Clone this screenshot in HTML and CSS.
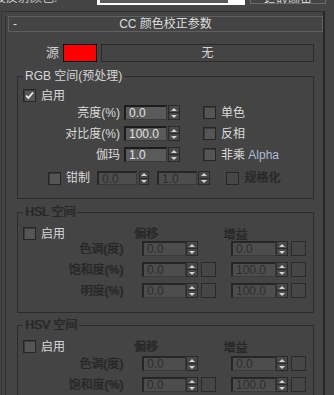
FILE: index.html
```html
<!DOCTYPE html>
<html lang="zh">
<head>
	<meta charset="UTF-8">
	<title>CC 颜色校正参数</title>
	<link rel="stylesheet" href="styles.css">
</head>
<body>
	<div class="topbar">
		<span class="tb-label">设反射颜色:</span>
		<span class="tb-field"><span class="tb-fill"></span></span>
		<span class="tb-btn">拾取颜色</span>
	</div>

	<div class="frame">
		<div class="rollout">
			<div class="rollout-head">
				<span class="head-toggle">-</span>
				<span class="head-title">CC 颜色校正参数</span>
			</div>

			<div class="source-row">
				<span class="source-label">源</span>
				<span class="swatch"></span>
				<span class="source-btn">无</span>
			</div>

			<!-- RGB -->
			<fieldset class="grp">
				<legend>RGB 空间(预处理)</legend>
				<div class="chk-row">
					<span class="chk checked"><svg width="11" height="11" viewBox="0 0 11 11"><path d="M2 5.5 L4.3 8 L9 2.5" fill="none" stroke="#f0f0f0" stroke-width="1.8"/></svg></span>
					<span class="chk-label">启用</span>
				</div>
				<div class="prow first">
					<span class="lbl">亮度(%)</span>
					<span class="num">0.0</span>
					<span class="spin"><i class="up"></i><i class="dn"></i></span>
					<span class="chk side"></span>
					<span class="chk-label">单色</span>
				</div>
				<div class="prow">
					<span class="lbl">对比度(%)</span>
					<span class="num">100.0</span>
					<span class="spin"><i class="up"></i><i class="dn"></i></span>
					<span class="chk side"></span>
					<span class="chk-label">反相</span>
				</div>
				<div class="prow">
					<span class="lbl">伽玛</span>
					<span class="num">1.0</span>
					<span class="spin"><i class="up"></i><i class="dn"></i></span>
					<span class="chk side"></span>
					<span class="chk-label">非乘 <span class="alpha">Alpha</span></span>
				</div>
				<div class="clamp-row">
					<span class="chk"></span>
					<span class="chk-label clamp-label">钳制</span>
					<span class="num off small">0.0</span>
					<span class="spin small"><i class="up"></i><i class="dn"></i></span>
					<span class="num off small second">1.0</span>
					<span class="spin wide"><i class="up"></i><i class="dn"></i></span>
					<span class="chk off norm"></span>
					<span class="chk-label off">规格化</span>
				</div>
			</fieldset>

			<!-- HSL -->
			<fieldset class="grp hsl">
				<legend class="off">HSL 空间</legend>
				<div class="hs-head">
					<span class="chk"></span>
					<span class="chk-label hs-enable">启用</span>
					<span class="off col-title">偏移</span>
					<span class="off col-title gain">增益</span>
				</div>
				<div class="hrow first">
					<span class="lbl off">色调(度)</span>
					<span class="num off">0.0</span>
					<span class="spin"><i class="up"></i><i class="dn"></i></span>
					<span class="sq hidden"></span>
					<span class="num off col2">0.0</span>
					<span class="spin"><i class="up"></i><i class="dn"></i></span>
					<span class="sq"></span>
				</div>
				<div class="hrow">
					<span class="lbl off">饱和度(%)</span>
					<span class="num off">0.0</span>
					<span class="spin"><i class="up"></i><i class="dn"></i></span>
					<span class="sq"></span>
					<span class="num off col2">100.0</span>
					<span class="spin"><i class="up"></i><i class="dn"></i></span>
					<span class="sq"></span>
				</div>
				<div class="hrow">
					<span class="lbl off">明度(%)</span>
					<span class="num off">0.0</span>
					<span class="spin"><i class="up"></i><i class="dn"></i></span>
					<span class="sq"></span>
					<span class="num off col2">100.0</span>
					<span class="spin"><i class="up"></i><i class="dn"></i></span>
					<span class="sq"></span>
				</div>
			</fieldset>

			<!-- HSV -->
			<fieldset class="grp hsv">
				<legend class="off">HSV 空间</legend>
				<div class="hs-head">
					<span class="chk"></span>
					<span class="chk-label hs-enable">启用</span>
					<span class="off col-title">偏移</span>
					<span class="off col-title gain">增益</span>
				</div>
				<div class="hrow first">
					<span class="lbl off">色调(度)</span>
					<span class="num off">0.0</span>
					<span class="spin"><i class="up"></i><i class="dn"></i></span>
					<span class="sq hidden"></span>
					<span class="num off col2">0.0</span>
					<span class="spin"><i class="up"></i><i class="dn"></i></span>
					<span class="sq"></span>
				</div>
				<div class="hrow">
					<span class="lbl off">饱和度(%)</span>
					<span class="num off">0.0</span>
					<span class="spin"><i class="up"></i><i class="dn"></i></span>
					<span class="sq"></span>
					<span class="num off col2">100.0</span>
					<span class="spin"><i class="up"></i><i class="dn"></i></span>
					<span class="sq"></span>
				</div>
			</fieldset>
		</div>
	</div>
</body>
</html>
```

FILE: styles.css
```css
html,
body {
	margin: 0;
	padding: 0;
	height: 100%;
	overflow: hidden;
}

body {
	background-color: #444444;
	color: #dadada;
	font-family: 'Liberation Sans', 'Noto Sans CJK SC', sans-serif;
	font-size: 12px;
	line-height: 12px;
}

/* strip of the panel above, mostly scrolled away */
.topbar {
	height: 6px;
	display: flex;
	align-items: flex-end;
	overflow: hidden;
}

.tb-label {
	width: 97px;
	height: 14px;
	line-height: 14px;
	margin-top: -9px;
	align-self: flex-start;
	white-space: nowrap;
	color: #cfcfcf;
	text-indent: -6px;
}

.tb-field {
	width: 148px;
	height: 5px;
	background-color: #ffffff;
	align-self: flex-start;
	display: flex;
}

.tb-fill {
	width: 128px;
	height: 3px;
	margin-left: 3px;
	background-color: #5a5a5a;
}

.tb-btn {
	align-self: flex-start;
	margin-left: 5px;
	width: 76px;
	height: 4px;
	box-sizing: border-box;
	border: 1px solid #6a6a6a;
	border-top: none;
	overflow: hidden;
	font-size: 12px;
	line-height: 4px;
	text-align: center;
	color: #d0d0d0;
}

.frame {
	margin: 5px 9px 0 1px;
	height: 400px;
	border-top: 1px solid #303030;
	border-left: 1px solid #363636;
	border-right: 2px solid #262626;
}

.rollout {
	margin-left: 3px;
	height: 100%;
	border-left: 1px solid #2e2e2e;
}

.rollout-head {
	margin: 4px 0 0 2px;
	height: 16px;
	box-sizing: border-box;
	border: 1px solid #5f5f5f;
	display: flex;
	line-height: 14px;
	color: #dedede;
}

.head-toggle {
	width: 10px;
	padding-left: 4px;
}

.head-title {
	flex: 1;
	text-align: center;
	padding-right: 14px;
}

.source-row {
	margin-top: 12px;
	display: flex;
	height: 18px;
	line-height: 18px;
}

.source-label {
	width: 53px;
	text-align: right;
	font-size: 13px;
	color: #cfcfcf;
}

.swatch {
	margin-left: 4px;
	width: 34px;
	box-sizing: border-box;
	border: 1px solid #000000;
	background-color: #ff0000;
}

.source-btn {
	margin-left: 4px;
	width: 213px;
	box-sizing: border-box;
	border: 1px solid #2a2a2a;
	text-align: center;
	line-height: 16px;
	color: #d4d4d4;
}

/* group boxes */
.grp {
	margin: 8px 9px 0 11px;
	padding: 0 0 13px 0;
	border: 1px solid #2c2c2c;
	min-width: 0;
}

.grp legend {
	margin-left: 5px;
	padding: 0 2px;
	line-height: 12px;
	color: #d6d6d6;
}

.hsl {
	margin-top: 7px;
	padding-bottom: 14px;
}

.hsv {
	margin-top: 6px;
}

.off {
	color: #272727;
	text-shadow: 1px 0 0 #2c2c2c;
}

.grp legend.off {
	color: #272727;
}

.chk-row {
	display: flex;
	align-items: center;
	height: 13px;
	margin: 7px 0 0 5px;
}

.chk {
	width: 13px;
	height: 13px;
	box-sizing: border-box;
	border: 1px solid #262626;
	background-color: #555555;
	box-shadow: inset 1px 1px 0 #3b3b3b;
	display: flex;
	align-items: center;
	justify-content: center;
	flex: none;
}

.chk.off {
	background-color: #474747;
	box-shadow: none;
}

.chk-label {
	margin-left: 5px;
	white-space: nowrap;
}

.alpha {
	color: #a9bcd9;
}

/* RGB rows */
.prow {
	display: flex;
	align-items: center;
	height: 15px;
	margin-top: 6px;
}

.prow.first {
	margin-top: 3px;
}

.lbl {
	width: 102px;
	margin-right: 4px;
	text-align: right;
	white-space: nowrap;
}

.num {
	width: 43px;
	height: 15px;
	box-sizing: border-box;
	padding-left: 3px;
	background-color: #5a5a5a;
	border-top: 2px solid #1c1c1c;
	border-left: 2px solid #1c1c1c;
	border-right: 1px solid #3a3a3a;
	border-bottom: 1px solid #3a3a3a;
	line-height: 12px;
	color: #e2e2e2;
	flex: none;
}

.num.off {
	background-color: #4d4d4d;
	border-top-color: #262626;
	border-left-color: #262626;
	color: #2e2e2e;
	text-shadow: none;
}

.spin {
	margin-left: 1px;
	width: 12px;
	height: 15px;
	box-sizing: border-box;
	border: 1px solid #2a2a2a;
	background-color: #484848;
	display: flex;
	flex-direction: column;
	flex: none;
}

.spin i {
	flex: 1;
	display: flex;
	align-items: center;
	justify-content: center;
}

.spin .up {
	border-bottom: 1px solid #2a2a2a;
}

.spin .up::before,
.spin .dn::before {
	content: "";
	border-left: 3px solid transparent;
	border-right: 3px solid transparent;
}

.spin .up::before {
	border-bottom: 3px solid #d2d2d2;
}

.spin .dn::before {
	border-top: 3px solid #d2d2d2;
}

.chk.side {
	margin-left: 23px;
}

.clamp-row {
	display: flex;
	align-items: center;
	height: 14px;
	margin: 9px 0 0 30px;
}

.clamp-label {
	width: 31px;
}

.num.small {
	width: 40px;
	height: 14px;
}

.spin.small {
	margin-left: 2px;
	width: 10px;
	height: 14px;
}

.num.second {
	margin-left: 8px;
}

.spin.wide {
	height: 14px;
	margin-left: 1px;
}

.chk.norm {
	margin-left: 16px;
}

/* HSL / HSV rows */
.hs-head {
	display: flex;
	align-items: center;
	height: 13px;
	margin: 9px 0 0 5px;
}

.hs-enable {
	width: 94px;
}

.col-title {
	width: 91px;
	white-space: nowrap;
}

.col-title.gain {
	margin-top: 3px;
}

.hrow {
	display: flex;
	align-items: center;
	height: 15px;
	margin-top: 6px;
}

.hrow.first {
	margin-top: 1px;
}

.hsv .hrow.first {
	margin-top: 3px;
}

.hrow .lbl {
	width: 105px;
	margin-right: 19px;
}

.hrow .num {
	width: 44px;
}

.hrow .num.col2 {
	width: 45px;
	margin-left: 15px;
}

.hrow .spin {
	margin-left: 0;
}

.sq {
	margin-left: 3px;
	width: 15px;
	height: 15px;
	box-sizing: border-box;
	border: 1px solid #2a2a2a;
	background-color: #464646;
	flex: none;
}

.sq.hidden {
	visibility: hidden;
}
```
